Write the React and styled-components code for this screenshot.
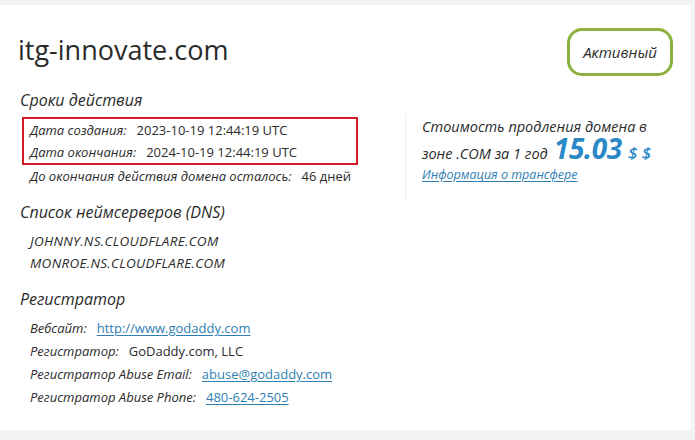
import React from 'react'
import styled, { createGlobalStyle } from 'styled-components'

const GlobalStyle = createGlobalStyle`
  html, body {
    margin: 0;
    padding: 0;
    background: #f3f3f3;
  }
  body {
    font-family: 'Open Sans', 'Noto Sans', sans-serif;
    color: #2b2b2b;
  }
`

const Card = styled.div`
  background: #fff;
  margin: 5px 4px 0 0;
  height: 425px;
  box-sizing: border-box;
  padding: 23px 18px 0 20px;
`

const Header = styled.div`
  display: flex;
  justify-content: space-between;
  align-items: center;
  height: 48px;
`

const Title = styled.h1`
  margin: 0 0 4px -2px;
  font-size: 27px;
  font-weight: 400;
  line-height: 34px;
  color: #2b2b2b;
`

const Badge = styled.div`
  display: flex;
  align-items: center;
  justify-content: center;
  width: 106px;
  height: 48px;
  box-sizing: border-box;
  border: 3px solid #8cb13c;
  border-radius: 15px;
  font-size: 15px;
  font-style: italic;
  color: #2b2b2b;
`

const Body = styled.div`
  display: flex;
  margin-top: 13px;
`

const LeftCol = styled.div`
  width: 385px;
`

const Heading = styled.h2`
  margin: ${p => p.$top || 0}px 0 0;
  font-size: 16px;
  font-weight: 400;
  font-style: italic;
  line-height: 22px;
  color: #2b2b2b;
`

const DatesBox = styled.div`
  width: 336px;
  box-sizing: border-box;
  border: 2px solid #d21b25;
  margin: 6px 0 0 2px;
  padding-left: 6px;
`

const Row = styled.div`
  font-size: 13px;
  line-height: ${p => p.$lh || 22}px;
  padding-left: ${p => p.$pad || 0}px;
  white-space: nowrap;
`

const Label = styled.span`
  font-style: italic;
  margin-right: 10px;
`

const Value = styled.span`
  color: #2b2b2b;
`

const Link = styled.a`
  color: #2f7fb5;
  text-decoration: underline;
  text-underline-offset: 2px;
`

const List = styled.div`
  margin-top: ${p => p.$top || 0}px;
`

const NsItem = styled.div`
  font-size: 13.5px;
  font-style: italic;
  line-height: 22px;
  padding-left: 10px;
  letter-spacing: 0.3px;
`

const RightCol = styled.div`
  margin-top: 26px;
  height: 85px;
  border-left: 1px solid #efefef;
  padding: 0 0 0 16px;
  font-style: italic;
  font-weight: 500;
  font-size: 14.5px;
`

const PriceLine = styled.div`
  line-height: 23px;
  height: ${p => p.$h || 23}px;
  white-space: nowrap;
`

const Price = styled.span`
  font-size: 28px;
  font-weight: 700;
  color: #2a88c6;
  margin-left: 6px;
  letter-spacing: -0.3px;
  line-height: 20px;
`

const Currency = styled.span`
  font-size: 17px;
  font-weight: 600;
  color: #2a88c6;
  margin-left: 6px;
`

const TransferLink = styled.a`
  display: block;
  margin-top: 6px;
  font-size: 12.5px;
  font-weight: 400;
  line-height: 18px;
  color: #2f7fb5;
  text-decoration: underline;
  text-underline-offset: 2px;
`

const registrar = [
  { label: 'Вебсайт:', value: 'http://www.godaddy.com', link: true },
  { label: 'Регистратор:', value: 'GoDaddy.com, LLC' },
  { label: 'Регистратор Abuse Email:', value: 'abuse@godaddy.com', link: true },
  { label: 'Регистратор Abuse Phone:', value: '480-624-2505', link: true },
]

export default function App() {
  return (
    <>
      <GlobalStyle />
      <Card>
        <Header>
          <Title>itg-innovate.com</Title>
          <Badge>Активный</Badge>
        </Header>
        <Body>
          <LeftCol>
            <Heading>Сроки действия</Heading>
            <DatesBox>
              <Row>
                <Label>Дата создания:</Label>
                <Value>2023-10-19 12:44:19 UTC</Value>
              </Row>
              <Row>
                <Label>Дата окончания:</Label>
                <Value>2024-10-19 12:44:19 UTC</Value>
              </Row>
            </DatesBox>
            <Row $pad={10}>
              <Label>До окончания действия домена осталось:</Label>
              <Value>46 дней</Value>
            </Row>

            <Heading $top={14}>Список неймсерверов (DNS)</Heading>
            <List $top={7}>
              <NsItem>JOHNNY.NS.CLOUDFLARE.COM</NsItem>
              <NsItem>MONROE.NS.CLOUDFLARE.COM</NsItem>
            </List>

            <Heading $top={14}>Регистратор</Heading>
            <List $top={7}>
              {registrar.map(r => (
                <Row key={r.label} $pad={10} $lh={23}>
                  <Label>{r.label}</Label>
                  {r.link ? <Link href="#">{r.value}</Link> : <Value>{r.value}</Value>}
                </Row>
              ))}
            </List>
          </LeftCol>
          <RightCol>
            <PriceLine>Стоимость продления домена в</PriceLine>
            <PriceLine $h={22}>
              зоне .COM за 1 год<Price>15.03</Price>
              <Currency>$ $</Currency>
            </PriceLine>
            <TransferLink href="#">Информация о трансфере</TransferLink>
          </RightCol>
        </Body>
      </Card>
    </>
  )
}
